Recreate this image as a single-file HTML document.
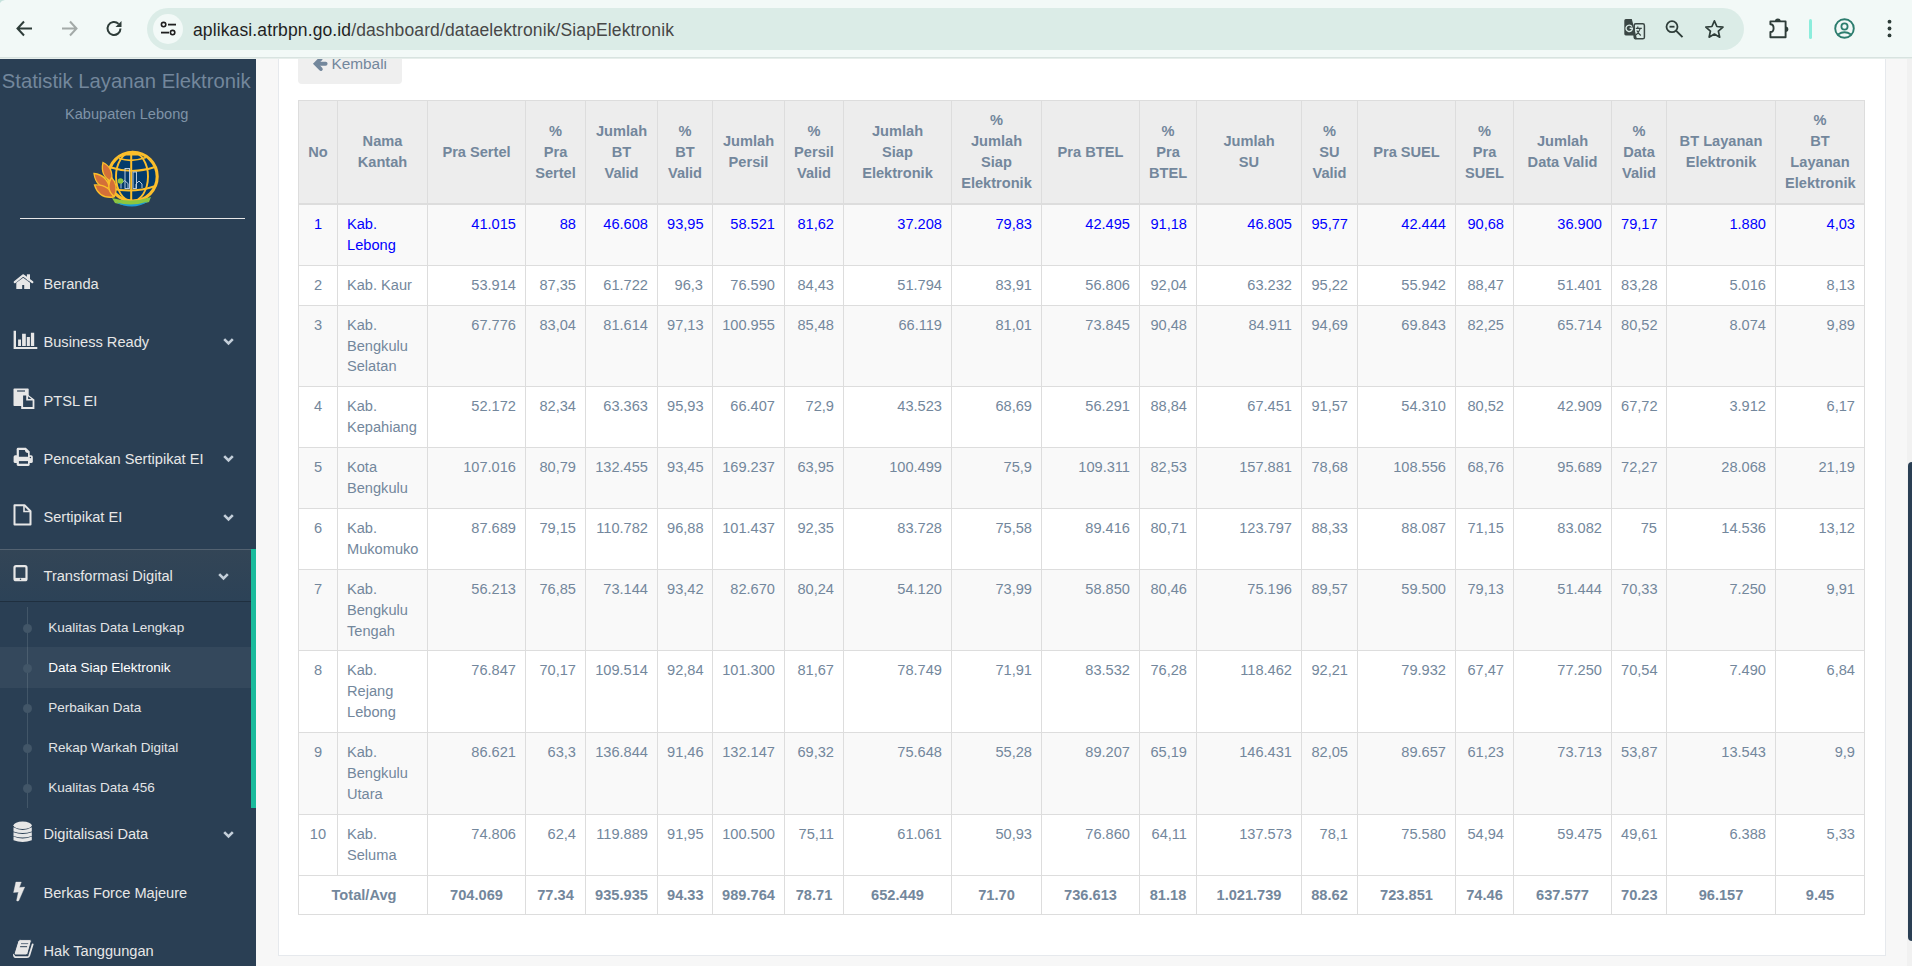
<!DOCTYPE html>
<html><head><meta charset="utf-8">
<style>
*{box-sizing:border-box}
html,body{margin:0;padding:0}
body{width:1912px;height:966px;overflow:hidden;position:relative;background:#F7F7F7;font-family:"Liberation Sans",sans-serif;color:#73879C}
.abs{position:absolute}
/* toolbar */
#tb{position:absolute;left:0;top:0;width:1912px;height:59px;background:#F2F9F7;border-bottom:1px solid #E6EEEB;box-shadow:inset 0 -1px 0 #D8E3E0}
#pill{position:absolute;left:147px;top:8px;width:1597px;height:42px;border-radius:21px;background:#DBECE7}
#site{position:absolute;left:153px;top:14px;width:30px;height:30px;border-radius:15px;background:#F2F9F7}
#url{position:absolute;left:193px;top:18px;font-size:17.5px;line-height:24px;color:#1F1F1F;white-space:nowrap;letter-spacing:0.12px}
#url span{color:#474747}
/* sidebar */
#sb{position:absolute;left:0;top:58px;width:256px;height:908px;background:#2A3F54;overflow:hidden}
.t{position:absolute;white-space:nowrap;line-height:1}
.mi{font-size:14.625px;color:#E7E7E7;left:43.5px}
.ci{font-size:13.5px;color:#E2E4E6;left:48.3px}
.chev{position:absolute;width:11px;height:8px}
.ico{position:absolute}
/* content */
#card{position:absolute;left:278px;top:20px;width:1608px;height:936px;background:#fff;border:1px solid #E6E9ED}
#btn{position:absolute;left:298px;top:40px;width:104px;height:44px;background:#EFEFEF;border-radius:4px}
#tbl{position:absolute;left:298px;top:100px;border-collapse:collapse;table-layout:fixed;width:1567px;font-size:14.625px;line-height:21px;color:#73879C}
#tbl th,#tbl td{border:1px solid #DDDDDD;padding:9px 9px 8px 9px}
#tbl th{padding-top:9.8px;padding-bottom:8.2px;background:#EDEDED;font-weight:bold;text-align:center;vertical-align:middle;border-bottom-width:2px}
#tbl td{vertical-align:top}
#tbl th.f4{padding-top:9px;padding-bottom:9px}
#tbl th.f1{padding-top:9.05px;padding-bottom:8.95px}
#tbl th.f2{padding-top:8.8px;padding-bottom:9.2px}
#tbl td.r{text-align:right}
#tbl td.c{text-align:center}
#tbl tbody tr:nth-child(odd) td{background:#F9F9F9}
#tbl tbody tr:nth-child(even) td{background:#FFFFFF}
#tbl tr.hl td{color:#0000FF}
#tbl tbody tr.tot td{font-weight:bold;text-align:center;background:#fff}
#sc{position:absolute;left:1907px;top:58px;width:5px;height:908px;background:#F1F1F1}
#thumb{position:absolute;left:1908px;top:462px;width:4px;height:479px;background:#2A3F54;border-radius:4px 0 0 4px}
</style></head><body>

<div id="card"></div>
<div id="btn"></div>
<div class="t" style="left:331.4px;top:55.9px;font-size:15.4px;color:#73879C">Kembali</div>
<svg class="ico" style="left:310px;top:54px" width="20" height="20" viewBox="0 0 20 20"><path d="M15.6 9.8 H7" stroke="#73879C" stroke-width="3.9" stroke-linecap="round" fill="none"/><path d="M10.8 15 L5.7 9.8 L10.8 4.6" stroke="#73879C" stroke-width="3.9" stroke-linecap="round" stroke-linejoin="miter" fill="none"/></svg>

<table id="tbl">
<colgroup><col style="width:39px"><col style="width:90px"><col style="width:98px"><col style="width:60px"><col style="width:72px"><col style="width:55px"><col style="width:72px"><col style="width:59px"><col style="width:108px"><col style="width:90px"><col style="width:98px"><col style="width:57px"><col style="width:105px"><col style="width:56px"><col style="width:98px"><col style="width:58px"><col style="width:98px"><col style="width:55px"><col style="width:109px"><col style="width:89px"></colgroup>
<thead><tr><th class="f1">No</th><th class="f2">Nama<br>Kantah</th><th class="f1">Pra Sertel</th><th class="f3">%<br>Pra<br>Sertel</th><th class="f3">Jumlah<br>BT<br>Valid</th><th class="f3">%<br>BT<br>Valid</th><th class="f2">Jumlah<br>Persil</th><th class="f3">%<br>Persil<br>Valid</th><th class="f3">Jumlah<br>Siap<br>Elektronik</th><th class="f4">%<br>Jumlah<br>Siap<br>Elektronik</th><th class="f1">Pra BTEL</th><th class="f3">%<br>Pra<br>BTEL</th><th class="f2">Jumlah<br>SU</th><th class="f3">%<br>SU<br>Valid</th><th class="f1">Pra SUEL</th><th class="f3">%<br>Pra<br>SUEL</th><th class="f2">Jumlah<br>Data Valid</th><th class="f3">%<br>Data<br>Valid</th><th class="f2">BT Layanan<br>Elektronik</th><th class="f4">%<br>BT<br>Layanan<br>Elektronik</th></tr></thead>
<tbody>
<tr class="hl" style="height:61px"><td class="c">1</td><td>Kab.<br>Lebong</td><td class="r">41.015</td><td class="r">88</td><td class="r">46.608</td><td class="r">93,95</td><td class="r">58.521</td><td class="r">81,62</td><td class="r">37.208</td><td class="r">79,83</td><td class="r">42.495</td><td class="r">91,18</td><td class="r">46.805</td><td class="r">95,77</td><td class="r">42.444</td><td class="r">90,68</td><td class="r">36.900</td><td class="r">79,17</td><td class="r">1.880</td><td class="r">4,03</td></tr>
<tr style="height:40px"><td class="c">2</td><td>Kab. Kaur</td><td class="r">53.914</td><td class="r">87,35</td><td class="r">61.722</td><td class="r">96,3</td><td class="r">76.590</td><td class="r">84,43</td><td class="r">51.794</td><td class="r">83,91</td><td class="r">56.806</td><td class="r">92,04</td><td class="r">63.232</td><td class="r">95,22</td><td class="r">55.942</td><td class="r">88,47</td><td class="r">51.401</td><td class="r">83,28</td><td class="r">5.016</td><td class="r">8,13</td></tr>
<tr style="height:81px"><td class="c">3</td><td>Kab.<br>Bengkulu<br><span style="position:relative;top:-1px">Selatan</span></td><td class="r">67.776</td><td class="r">83,04</td><td class="r">81.614</td><td class="r">97,13</td><td class="r">100.955</td><td class="r">85,48</td><td class="r">66.119</td><td class="r">81,01</td><td class="r">73.845</td><td class="r">90,48</td><td class="r">84.911</td><td class="r">94,69</td><td class="r">69.843</td><td class="r">82,25</td><td class="r">65.714</td><td class="r">80,52</td><td class="r">8.074</td><td class="r">9,89</td></tr>
<tr style="height:61px"><td class="c">4</td><td>Kab.<br>Kepahiang</td><td class="r">52.172</td><td class="r">82,34</td><td class="r">63.363</td><td class="r">95,93</td><td class="r">66.407</td><td class="r">72,9</td><td class="r">43.523</td><td class="r">68,69</td><td class="r">56.291</td><td class="r">88,84</td><td class="r">67.451</td><td class="r">91,57</td><td class="r">54.310</td><td class="r">80,52</td><td class="r">42.909</td><td class="r">67,72</td><td class="r">3.912</td><td class="r">6,17</td></tr>
<tr style="height:61px"><td class="c">5</td><td>Kota<br>Bengkulu</td><td class="r">107.016</td><td class="r">80,79</td><td class="r">132.455</td><td class="r">93,45</td><td class="r">169.237</td><td class="r">63,95</td><td class="r">100.499</td><td class="r">75,9</td><td class="r">109.311</td><td class="r">82,53</td><td class="r">157.881</td><td class="r">78,68</td><td class="r">108.556</td><td class="r">68,76</td><td class="r">95.689</td><td class="r">72,27</td><td class="r">28.068</td><td class="r">21,19</td></tr>
<tr style="height:61px"><td class="c">6</td><td>Kab.<br>Mukomuko</td><td class="r">87.689</td><td class="r">79,15</td><td class="r">110.782</td><td class="r">96,88</td><td class="r">101.437</td><td class="r">92,35</td><td class="r">83.728</td><td class="r">75,58</td><td class="r">89.416</td><td class="r">80,71</td><td class="r">123.797</td><td class="r">88,33</td><td class="r">88.087</td><td class="r">71,15</td><td class="r">83.082</td><td class="r">75</td><td class="r">14.536</td><td class="r">13,12</td></tr>
<tr style="height:81px"><td class="c">7</td><td>Kab.<br>Bengkulu<br>Tengah</td><td class="r">56.213</td><td class="r">76,85</td><td class="r">73.144</td><td class="r">93,42</td><td class="r">82.670</td><td class="r">80,24</td><td class="r">54.120</td><td class="r">73,99</td><td class="r">58.850</td><td class="r">80,46</td><td class="r">75.196</td><td class="r">89,57</td><td class="r">59.500</td><td class="r">79,13</td><td class="r">51.444</td><td class="r">70,33</td><td class="r">7.250</td><td class="r">9,91</td></tr>
<tr style="height:82px"><td class="c">8</td><td>Kab.<br>Rejang<br>Lebong</td><td class="r">76.847</td><td class="r">70,17</td><td class="r">109.514</td><td class="r">92,84</td><td class="r">101.300</td><td class="r">81,67</td><td class="r">78.749</td><td class="r">71,91</td><td class="r">83.532</td><td class="r">76,28</td><td class="r">118.462</td><td class="r">92,21</td><td class="r">79.932</td><td class="r">67,47</td><td class="r">77.250</td><td class="r">70,54</td><td class="r">7.490</td><td class="r">6,84</td></tr>
<tr style="height:82px"><td class="c">9</td><td>Kab.<br>Bengkulu<br>Utara</td><td class="r">86.621</td><td class="r">63,3</td><td class="r">136.844</td><td class="r">91,46</td><td class="r">132.147</td><td class="r">69,32</td><td class="r">75.648</td><td class="r">55,28</td><td class="r">89.207</td><td class="r">65,19</td><td class="r">146.431</td><td class="r">82,05</td><td class="r">89.657</td><td class="r">61,23</td><td class="r">73.713</td><td class="r">53,87</td><td class="r">13.543</td><td class="r">9,9</td></tr>
<tr style="height:61px"><td class="c">10</td><td>Kab.<br>Seluma</td><td class="r">74.806</td><td class="r">62,4</td><td class="r">119.889</td><td class="r">91,95</td><td class="r">100.500</td><td class="r">75,11</td><td class="r">61.061</td><td class="r">50,93</td><td class="r">76.860</td><td class="r">64,11</td><td class="r">137.573</td><td class="r">78,1</td><td class="r">75.580</td><td class="r">54,94</td><td class="r">59.475</td><td class="r">49,61</td><td class="r">6.388</td><td class="r">5,33</td></tr>
<tr class="tot" style="height:39px"><td colspan="2" style="padding-left:10px;padding-right:8px">Total/Avg</td><td>704.069</td><td>77.34</td><td>935.935</td><td>94.33</td><td>989.764</td><td>78.71</td><td>652.449</td><td>71.70</td><td>736.613</td><td>81.18</td><td>1.021.739</td><td>88.62</td><td>723.851</td><td>74.46</td><td>637.577</td><td>70.23</td><td>96.157</td><td>9.45</td></tr>
</tbody>
</table>

<div id="sc"></div>
<div id="thumb"></div>

<div id="sb">
  <div class="t" style="left:1.8px;top:12.6px;font-size:20.25px;color:#73879C">Statistik Layanan Elektronik</div>
  <div class="t" style="left:65px;top:48.5px;font-size:14.625px;color:#7F93A7">Kabupaten Lebong</div>
  <!-- logo -->
  <svg class="ico" style="left:88px;top:86px" width="80" height="66" viewBox="0 0 80 66">
    <circle cx="44.8" cy="32.6" r="25" fill="#033B6C"/>
    <g fill="none" stroke="#FBBE2B">
      <circle cx="44.8" cy="32.6" r="24.4" stroke-width="3.1"/>
      <ellipse cx="44" cy="32.6" rx="16" ry="24.5" stroke-width="1.9"/>
      <line x1="43.2" y1="8" x2="43.2" y2="58" stroke-width="2"/>
      <path d="M31 14.5 Q44 18.5 58 13.5" stroke-width="1.8"/>
      <path d="M23 23.5 Q44 30.5 67 23" stroke-width="1.9"/>
      <path d="M22 44 Q44 50 67.5 42" stroke-width="1.9"/>
      <path d="M44.8 7.8 L40 10.5 L49 10.5 Z" stroke-width="2"/>
    </g>
    <path d="M24 54 Q44 59.5 63 53 L61 58 Q44 64.5 27 59 Z" fill="#8CC63F"/>
    <path d="M28.5 58.5 Q44 63 60 57.5 Q52 62.5 44 62.5 Q35 62.5 28.5 58.5 Z" fill="#1C9AD6"/>
    <g fill="none" stroke="#C9D8E8" stroke-width="0.9">
      <rect x="37" y="24.5" width="4.5" height="20"/>
      <rect x="45" y="28" width="3.5" height="16.5"/>
      <path d="M33 44.5 V39.5 L36.5 36.5 L40 39.5 V44.5"/>
      <path d="M48 44 V40 L51 37 L54 40 V44"/>
    </g>
    <circle cx="32.5" cy="37" r="2.8" fill="#8CC63F"/>
    <g fill="#D46F38" stroke="#FBBE2B" stroke-width="1.3">
      <path d="M23.5 37.5 Q12 32 15 18.5 Q26 24 23.5 37.5 Z"/>
      <path d="M21.5 44 Q8 44 6 29.5 Q19 31 21.5 44 Z"/>
      <path d="M25.5 53 Q11 55 6.5 41 Q21 40 25.5 53 Z"/>
      <path d="M26.5 52.5 Q17 46 23.5 33.5 Q31 41 26.5 52.5 Z"/>
    </g>
  </svg>
  <div class="abs" style="left:20px;top:159.5px;width:225px;height:1px;background:#E7E7E7"></div>

  <!-- menu -->
  <svg class="ico" style="left:8px;top:210px" width="36" height="28" viewBox="0 0 36 28"><rect x="18.9" y="6.3" width="3.1" height="6" fill="#E7E7E7"/><path d="M6.8 14.1 L15.2 7.4 L24.3 14.1" fill="none" stroke="#E7E7E7" stroke-width="2.3" stroke-linecap="round" stroke-linejoin="round"/><path d="M8.3 14.7 L15.2 9.7 L22 14.7 V20.9 H16.2 V17.1 H14.2 V20.9 H8.3 Z" fill="#E7E7E7"/></svg>
  <div class="t mi" style="top:218.9px">Beranda</div>

  <svg class="ico" style="left:8px;top:268px" width="36" height="28" viewBox="0 0 36 28"><path d="M5.6 4.8 H8 V20.9 H29.3 V23 H5.6 Z M10.1 13.6 H13 V20.1 H10.1 Z M14.1 7.8 H17.8 V20.1 H14.1 Z M18.8 10.9 H21.9 V20.1 H18.8 Z M22.9 6.7 H26.2 V20.1 H22.9 Z" fill="#E7E7E7"/></svg>
  <div class="t mi" style="top:277.4px">Business Ready</div>
  <svg class="chev" style="left:223.0px;top:280.0px" viewBox="0 0 11 8"><path d="M1.2 1.2 L5.5 5.5 L9.8 1.2" fill="none" stroke="#C4CFDA" stroke-width="2.6"/></svg>

  <svg class="ico" style="left:8px;top:326px" width="36" height="28" viewBox="0 0 36 28"><rect x="5.5" y="4.6" width="15.2" height="17.4" rx="0.8" fill="#E7E7E7"/><rect x="9.1" y="6.2" width="7.9" height="1.6" fill="#5C6B7A"/><path d="M13.2 9.9 H19 L26.4 15.4 V24.9 H13.2 Z" fill="#E7E7E7"/><path d="M15.1 11.6 H18.2 V16.5 H24.6 V23 H15.1 Z" fill="#2A3F54"/><path d="M20.1 12.2 V14.9 H23.4 Z" fill="#2A3F54"/></svg>
  <div class="t mi" style="top:335.9px">PTSL EI</div>

  <svg class="ico" style="left:8px;top:384px" width="36" height="28" viewBox="0 0 36 28"><path d="M8.7 7.2 Q8.7 5.8 10.1 5.8 H17.9 L21.7 9.6 V14 H8.7 Z" fill="#E7E7E7"/><rect x="5.6" y="13.3" width="19.2" height="7.7" rx="1.6" fill="#E7E7E7"/><path d="M8.7 18.5 H21.7 V22.6 Q21.7 23.9 20.4 23.9 H10 Q8.7 23.9 8.7 22.6 Z" fill="#E7E7E7"/><path d="M10.9 8.1 H16.9 Q17.2 10.9 20 11 V14.8 H10.9 Z" fill="#2A3F54"/><rect x="10.9" y="19.1" width="9.1" height="2.6" fill="#2A3F54"/><circle cx="22.4" cy="15.5" r="0.7" fill="#2A3F54"/></svg>
  <div class="t mi" style="top:394.4px">Pencetakan Sertipikat EI</div>
  <svg class="chev" style="left:223.0px;top:397.0px" viewBox="0 0 11 8"><path d="M1.2 1.2 L5.5 5.5 L9.8 1.2" fill="none" stroke="#C4CFDA" stroke-width="2.6"/></svg>

  <svg class="ico" style="left:13px;top:446px" width="19" height="22" viewBox="0 0 19 22"><path d="M1.5 1.2 H11.5 L17.5 7.2 V20.5 H1.5 Z" fill="none" stroke="#E7E7E7" stroke-width="2" stroke-linejoin="round"/><path d="M11 1.5 V7.5 H17" fill="none" stroke="#E7E7E7" stroke-width="1.6"/></svg>
  <div class="t mi" style="top:451.9px">Sertipikat EI</div>
  <svg class="chev" style="left:223.0px;top:456.0px" viewBox="0 0 11 8"><path d="M1.2 1.2 L5.5 5.5 L9.8 1.2" fill="none" stroke="#C4CFDA" stroke-width="2.6"/></svg>

  <!-- active -->
  <div class="abs" style="left:0;top:491px;width:251px;height:52px;background:linear-gradient(#334556,#2C4257);box-shadow:inset 0 1px 0 rgba(255,255,255,.16), 0 1px 0 rgba(0,0,0,.25)"></div>
  <div class="abs" style="left:251px;top:491px;width:5px;height:259px;background:#1ABB9C"></div>
  <svg class="ico" style="left:13px;top:506px" width="15" height="18" viewBox="0 0 15 18"><rect x="1.5" y="2.2" width="12" height="14" rx="1.5" fill="none" stroke="#E7E7E7" stroke-width="2.2"/><rect x="1.5" y="13.9" width="12" height="2.6" fill="#E7E7E7"/><circle cx="7.5" cy="15.3" r="0.75" fill="#2C4257"/></svg>
  <div class="t mi" style="top:511.1px">Transformasi Digital</div>
  <svg class="chev" style="left:218.0px;top:515.0px" viewBox="0 0 11 8"><path d="M1.2 1.2 L5.5 5.5 L9.8 1.2" fill="none" stroke="#C4CFDA" stroke-width="2.6"/></svg>

  <div class="abs" style="left:27px;top:549px;width:1px;height:201px;background:#425668"></div>
  <div class="abs" style="left:0;top:589px;width:251px;height:41px;background:rgba(255,255,255,.05)"></div>
  <div class="abs" style="left:23px;top:565.5px;width:9px;height:9px;border-radius:50%;background:#425668"></div>
  <div class="abs" style="left:23px;top:605.5px;width:9px;height:9px;border-radius:50%;background:#425668"></div>
  <div class="abs" style="left:23px;top:645.5px;width:9px;height:9px;border-radius:50%;background:#425668"></div>
  <div class="abs" style="left:23px;top:685.5px;width:9px;height:9px;border-radius:50%;background:#425668"></div>
  <div class="abs" style="left:23px;top:725.5px;width:9px;height:9px;border-radius:50%;background:#425668"></div>
  <div class="t ci" style="top:562.6px">Kualitas Data Lengkap</div>
  <div class="t ci" style="top:603.3px;color:#FFFFFF">Data Siap Elektronik</div>
  <div class="t ci" style="top:642.6px">Perbaikan Data</div>
  <div class="t ci" style="top:682.6px">Rekap Warkah Digital</div>
  <div class="t ci" style="top:723.4px">Kualitas Data 456</div>

  <svg class="ico" style="left:8px;top:758px" width="36" height="28" viewBox="0 0 36 28"><ellipse cx="14.65" cy="9.3" rx="9.15" ry="3.75" fill="#E7E7E7"/><path d="M5.5 11.3 Q14.65 16.6 23.8 11.3 V15.4 Q14.65 18.4 5.5 15.4 Z M5.5 16.3 Q14.65 19.9 23.8 16.3 V20 Q14.65 23 5.5 20 Z M5.5 20.6 Q14.65 24.4 23.8 20.6 V24.2 Q14.65 27.6 5.5 24.2 Z" fill="#E7E7E7"/></svg>
  <div class="t mi" style="top:769.4px">Digitalisasi Data</div>
  <svg class="chev" style="left:223.0px;top:773.0px" viewBox="0 0 11 8"><path d="M1.2 1.2 L5.5 5.5 L9.8 1.2" fill="none" stroke="#C4CFDA" stroke-width="2.6"/></svg>

  <svg class="ico" style="left:8px;top:818px" width="36" height="28" viewBox="0 0 36 28"><path d="M7.9 6.1 H13.3 L11.3 11.5 L16.7 11.1 L10.8 24.6 Q9.6 25.6 8.6 24.6 L10.4 16 L5.6 16.5 Z" fill="#E7E7E7" stroke="#E7E7E7" stroke-width="0.4" stroke-linejoin="round"/></svg>
  <div class="t mi" style="top:828.4px">Berkas Force Majeure</div>

  <svg class="ico" style="left:8px;top:876px" width="36" height="28" viewBox="0 0 36 28"><path d="M24.7 10.3 L21.2 21.7 Q20.7 23.2 19.1 23.2 H8.4 Q5.8 23.2 5.9 20.6" fill="none" stroke="#E7E7E7" stroke-width="1.8" stroke-linecap="round"/><path d="M12.4 5.6 H22 Q23.8 5.6 23.3 7.3 L19.9 19.6 Q19.5 21 17.9 21 H7.8 Q5.7 21 6.2 19.2 L9.9 7.3 Q10.5 5.6 12.4 5.6 Z" fill="#E7E7E7" stroke="#2A3F54" stroke-width="1"/><path d="M13 9.6 H20.2" stroke="#6C7B8B" stroke-width="1.1"/><path d="M12.1 12.7 H19.1" stroke="#2A3F54" stroke-width="1"/></svg>
  <div class="t mi" style="top:885.6px">Hak Tanggungan</div>
</div>

<div id="tb">
  <svg class="ico" style="left:16px;top:20px" width="17" height="17" viewBox="0 0 17 17"><path d="M8 1.5 L1.5 8.5 L8 15.5 M1.5 8.5 H16" fill="none" stroke="#2E3D39" stroke-width="2"/></svg>
  <svg class="ico" style="left:61px;top:20px" width="17" height="17" viewBox="0 0 17 17"><path d="M9 1.5 L15.5 8.5 L9 15.5 M15.5 8.5 H1" fill="none" stroke="#A3AAA8" stroke-width="2"/></svg>
  <svg class="ico" style="left:105px;top:19px" width="19" height="19" viewBox="0 0 19 19"><path d="M15.5 9.5 A6.5 6.5 0 1 1 13.6 4.9" fill="none" stroke="#2E3D39" stroke-width="2"/><path d="M16.5 2 V8 H10.5 Z" fill="#2E3D39"/></svg>
  <svg class="ico" style="left:0;top:0" width="8" height="4" viewBox="0 0 8 4"><path d="M0 0 H5 Q1.2 0.6 0 3 Z" fill="#C5E2DC"/></svg>
  <div id="pill"></div>
  <div id="site"></div>
  <svg class="ico" style="left:160px;top:21px" width="17" height="16" viewBox="0 0 17 16"><circle cx="3.6" cy="3.6" r="2.2" fill="none" stroke="#1F1F1F" stroke-width="1.6"/><path d="M8 3.6 H16" stroke="#1F1F1F" stroke-width="1.8"/><circle cx="12.6" cy="11.6" r="2.2" fill="none" stroke="#1F1F1F" stroke-width="1.6"/><path d="M1 11.6 H9" stroke="#1F1F1F" stroke-width="1.8"/></svg>
  <div id="url">aplikasi.atrbpn.go.id<span>/dashboard/dataelektronik/SiapElektronik</span></div>
  <!-- translate -->
  <svg class="ico" style="left:1620px;top:14px" width="30" height="30" viewBox="0 0 30 30"><rect x="14.2" y="9.8" width="10.2" height="15" rx="1.6" fill="#DBECE7" stroke="#3A4644" stroke-width="1.5"/><path d="M5.8 5 H11.8 L16.8 24.2 Q16.5 25.6 15 25 L13.7 21.4 H5.8 Q4.3 21.4 4.3 20 V6.5 Q4.3 5 5.8 5 Z" fill="#3A4644"/><path d="M11.9 12.6 A3.2 3.2 0 1 0 12.4 14.2 H9.6" fill="none" stroke="#DBECE7" stroke-width="1.4"/><path d="M15.8 14.3 H21.8 M17.8 12.6 V14.3 M20.2 14.6 Q18.5 19 16 21 M16.8 16.5 Q18.5 19.5 20.8 21.5" fill="none" stroke="#3A4644" stroke-width="1.2"/></svg>
  <!-- zoom -->
  <svg class="ico" style="left:1664px;top:19px" width="20" height="20" viewBox="0 0 20 20"><circle cx="8" cy="7.7" r="5.5" fill="none" stroke="#2E3D39" stroke-width="1.8"/><path d="M5.5 7.7 H10.5" stroke="#2E3D39" stroke-width="1.8"/><path d="M12 11.7 L18.5 18.2" stroke="#2E3D39" stroke-width="1.9"/></svg>
  <!-- star -->
  <svg class="ico" style="left:1704px;top:19px" width="21" height="21" viewBox="0 0 21 21"><path d="M10.40 1.90 L12.87 7.50 L18.96 8.12 L14.39 12.20 L15.69 18.18 L10.40 15.10 L5.11 18.18 L6.41 12.20 L1.84 8.12 L7.93 7.50 Z" fill="none" stroke="#2E3D39" stroke-width="1.7" stroke-linejoin="round"/></svg>
  <!-- puzzle -->
  <svg class="ico" style="left:1766px;top:16px" width="26" height="24" viewBox="0 0 26 24"><path d="M4.4 5.4 H19.6 V21.2 H4.4 V16 Q7.6 16 7.6 12.15 Q7.6 8.3 4.4 8.3 Z" fill="none" stroke="#2E3D39" stroke-width="1.9" stroke-linejoin="round"/><path d="M8.9 5.4 A2.9 2.9 0 0 1 14.7 5.4 Z" fill="#2E3D39"/><path d="M19.6 10.5 A2.7 2.7 0 0 1 19.6 15.9 Z" fill="#2E3D39"/></svg>
  <div class="abs" style="left:1809px;top:19px;width:3px;height:20px;border-radius:1.5px;background:#8CEDDC"></div>
  <!-- profile -->
  <svg class="ico" style="left:1833px;top:17px" width="23" height="23" viewBox="0 0 23 23"><circle cx="11.5" cy="11.5" r="9.3" fill="none" stroke="#2C7D6E" stroke-width="1.9"/><circle cx="11.5" cy="9.5" r="3.1" fill="none" stroke="#2C7D6E" stroke-width="1.8"/><path d="M5 17.5 Q11.5 13 18 17.5" fill="none" stroke="#2C7D6E" stroke-width="1.8"/></svg>
  <svg class="ico" style="left:1886px;top:18px" width="8" height="22" viewBox="0 0 8 22"><circle cx="3.5" cy="3.7" r="1.9" fill="#2E3D39"/><circle cx="3.5" cy="10.5" r="1.9" fill="#2E3D39"/><circle cx="3.5" cy="17.4" r="1.9" fill="#2E3D39"/></svg>
</div>

</body></html>
